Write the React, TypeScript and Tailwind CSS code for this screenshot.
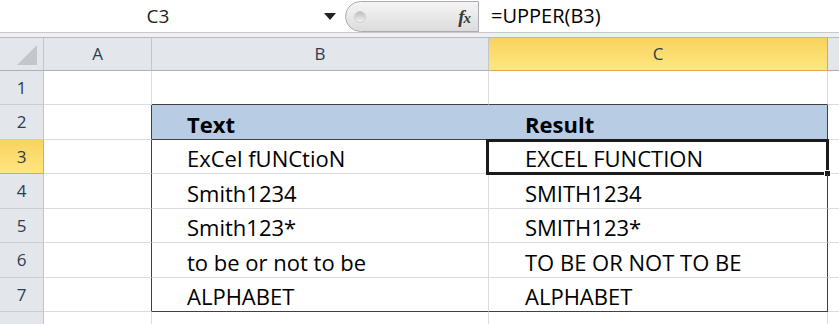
import React from 'react';

// Excel 2010 sheet: UPPER() example
const GRID = 'grid grid-cols-[44px_108px_337px_339px_1fr]';
const FONT = "font-['Open_Sans','Noto_Sans',sans-serif]";

type Row = { n: number; b: string; c: string; h: string };

const rows: Row[] = [
  { n: 1, b: '', c: '', h: 'h-[34px]' },
  { n: 2, b: 'Text', c: 'Result', h: 'h-[35px]' },
  { n: 3, b: 'ExCel fUNCtioN', c: 'EXCEL FUNCTION', h: 'h-[34px]' },
  { n: 4, b: 'Smith1234', c: 'SMITH1234', h: 'h-[35px]' },
  { n: 5, b: 'Smith123*', c: 'SMITH123*', h: 'h-[34px]' },
  { n: 6, b: 'to be or not to be', c: 'TO BE OR NOT TO BE', h: 'h-[35px]' },
  { n: 7, b: 'ALPHABET', c: 'ALPHABET', h: 'h-[34px]' },
  { n: 8, b: '', c: '', h: 'h-[34px]' },
];

const inTable = (n: number) => n >= 2 && n <= 7;

const aClass = (n: number) =>
  inTable(n)
    ? 'border-r border-b border-r-[#404040] border-b-[#dadcdd]'
    : 'border-r border-b border-r-[#dadcdd] border-b-[#dadcdd]';

const bClass = (n: number) => {
  if (n === 1) return 'border-r border-b border-r-[#dadcdd] border-b-[#404040]';
  if (n === 2) return 'bg-[#b8cce4] font-bold border-r border-b border-r-[#b8cce4] border-b-[#404040]';
  if (n === 7) return 'border-r border-b border-r-[#dadcdd] border-b-[#404040]';
  return 'border-r border-b border-r-[#dadcdd] border-b-[#dadcdd]';
};

const cClass = (n: number) => {
  if (n === 1) return 'border-r border-b border-r-[#dadcdd] border-b-[#404040]';
  if (n === 2) return 'bg-[#b8cce4] font-bold border-r border-b border-r-[#404040] border-b-[#404040]';
  if (n === 7) return 'border-r border-b border-r-[#404040] border-b-[#404040]';
  if (inTable(n)) return 'border-r border-b border-r-[#404040] border-b-[#dadcdd]';
  return 'border-r border-b border-r-[#dadcdd] border-b-[#dadcdd]';
};

const FormulaBar: React.FC = () => (
  <div className="flex h-[32px] bg-white">
    <div className={`w-[316px] flex items-center justify-center text-[19px] text-[#1f1f1f] ${FONT}`}>C3</div>
    <div className="w-[29px] flex items-center justify-center pr-[2px]">
      <svg width="12" height="7" viewBox="0 0 12 7">
        <polygon points="0,0 12,0 6,7" fill="#222" />
      </svg>
    </div>
    <div className="w-[134px] mt-[1px] h-[31px] flex items-center justify-between rounded-l-[16px] border border-r border-[#a9adb3] bg-gradient-to-b from-[#f5f5f5] to-[#dcdcdc] pl-[8px] pr-[8px]">
      <div className="w-[12px] h-[12px] rounded-full bg-gradient-to-b from-[#bdbdbd] to-[#f3f3f3] border border-[#cfcfcf]" />
      <span className="font-['Liberation_Serif',serif] italic font-bold text-[19px] text-[#3a3a3a] leading-none tracking-[-1px]">
        f<span className="text-[15px]">x</span>
      </span>
    </div>
    <div className={`flex-1 flex items-center pl-[12px] text-[20px] text-black ${FONT}`}>=UPPER(B3)</div>
  </div>
);

const ColumnHeaders: React.FC = () => (
  <div className={`${GRID} h-[33px] text-[17px] text-[#2f3b4c] ${FONT}`}>
    <div className="border-r border-b border-r-[#c0c6ce] border-b-[#aab1ba] bg-[#e3e7ec] flex items-end justify-end pr-[6px] pb-[5px]">
      <svg width="20" height="20" viewBox="0 0 20 20">
        <polygon points="20,0 20,20 0,20" fill="#c3c7cc" />
      </svg>
    </div>
    <div className="border-r border-b border-r-[#c0c6ce] border-b-[#aab1ba] bg-[#e3e7ec] flex items-center justify-center">A</div>
    <div className="border-r border-b border-r-[#c0c6ce] border-b-[#aab1ba] bg-[#e3e7ec] flex items-center justify-center">B</div>
    <div className="border-r border-b border-r-[#e3a64e] border-b-[#e3a64e] bg-gradient-to-b from-[#f9d25e] to-[#fee77f] flex items-center justify-center">C</div>
    <div className="border-b border-b-[#aab1ba] bg-[#e3e7ec]" />
  </div>
);

const App: React.FC = () => {
  return (
    <div className={`w-[839px] h-[324px] overflow-hidden bg-white ${FONT}`}>
      <FormulaBar />
      <div className="h-[6px] border-t border-b border-t-[#c8c8c8] border-b-[#b4bac2] bg-[#eef0f3]" />
      <ColumnHeaders />
      {rows.map(r => (
        <div key={r.n} className={`${GRID} ${r.h} text-[22px] leading-[28px] text-black`}>
          <div
            className={
              r.n === 3
                ? 'border-r border-b border-r-[#e3a64e] border-b-[#e3a64e] bg-gradient-to-b from-[#f9d25e] to-[#fee77f] flex items-center justify-center text-[17px] text-[#2f3b4c]'
                : 'border-r border-b border-r-[#c0c6ce] border-b-[#c9ced5] bg-[#e3e7ec] flex items-center justify-center text-[17px] text-[#2f3b4c]'
            }
          >
            {r.n < 8 ? r.n : ''}
          </div>
          <div className={aClass(r.n)} />
          <div className={`${bClass(r.n)} flex items-center pl-[35px] pt-[3px]`}>{r.b}</div>
          <div className={`${cClass(r.n)} relative flex items-center pl-[36px] pt-[3px]`}>
            {r.c}
            {r.n === 3 && (
              <div className="absolute -left-[3px] -top-[1px] -right-[2px] -bottom-[2px] border-[3px] border-[#1b1b1b]">
                <div className="absolute -right-[5px] -bottom-[5px] w-[7px] h-[7px] bg-[#1b1b1b] border border-white" />
              </div>
            )}
          </div>
          <div className="border-b border-b-[#dadcdd]" />
        </div>
      ))}
    </div>
  );
};

export default App;
